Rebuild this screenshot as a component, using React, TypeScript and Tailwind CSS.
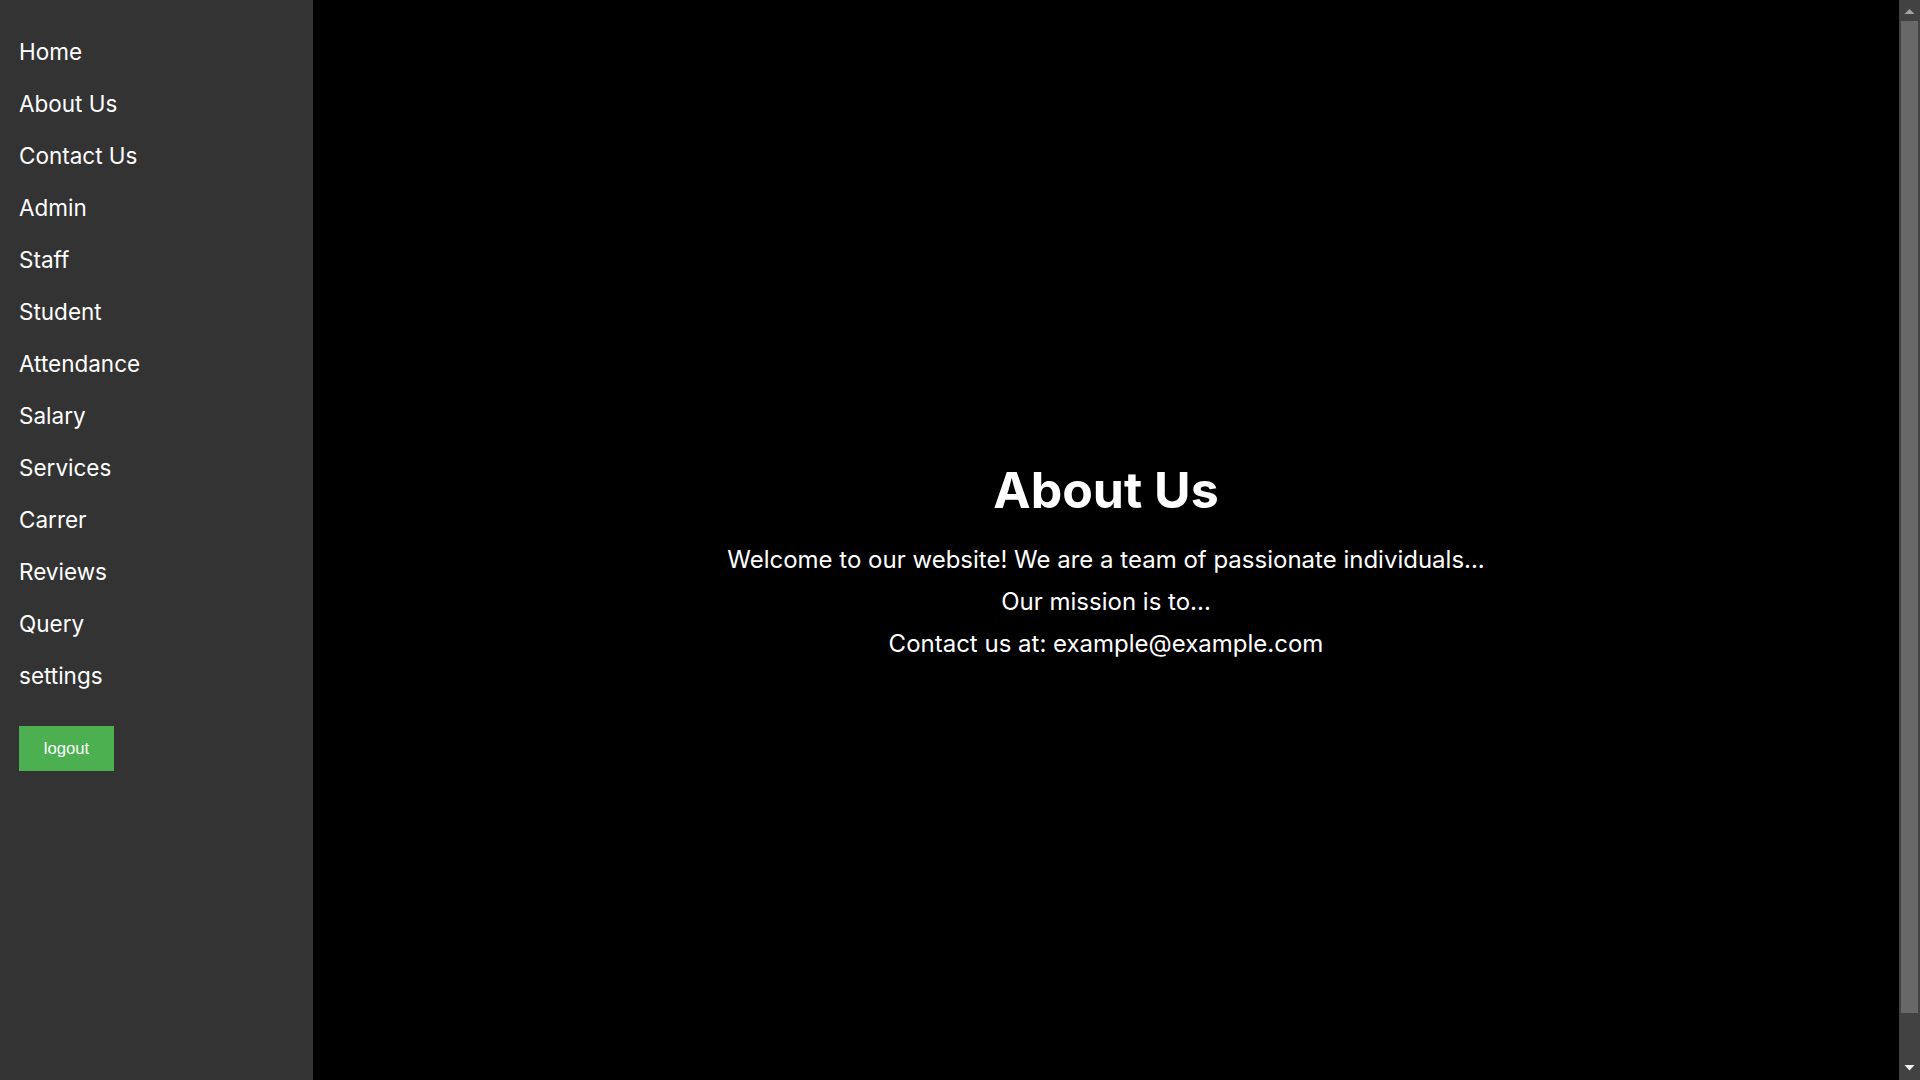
import React from "react";

const items = [
  "Home",
  "About Us",
  "Contact Us",
  "Admin",
  "Staff",
  "Student",
  "Attendance",
  "Salary",
  "Services",
  "Carrer",
  "Reviews",
  "Query",
  "settings",
];

function ScrollBar() {
  return (
    <div className="flex h-full w-[21px] shrink-0 flex-col bg-[#424242]">
      <div className="h-[21px] shrink-0">
        <svg width="21" height="21" viewBox="0 0 21 21">
          <polygon points="5.5,14 15.5,14 10.5,9" fill="#a3a3a3" />
        </svg>
      </div>
      <div className="mx-[2px] h-[992px] shrink-0 bg-[#686868]" />
      <div className="flex-1" />
      <div className="h-[21px] shrink-0">
        <svg width="21" height="21" viewBox="0 0 21 21">
          <polygon points="5.5,6 15.5,6 10.5,11.5" fill="#f2f2f2" />
        </svg>
      </div>
    </div>
  );
}

export default function App() {
  return (
    <div className="flex h-screen w-full overflow-hidden bg-black">
      <div className="flex-1 overflow-hidden">
        <div className="flex h-[1129px] w-full font-['Inter',sans-serif]">
          <aside className="flex w-[313px] shrink-0 flex-col bg-[#333333] px-[19px] pt-[26px]">
            <nav className="flex flex-col">
              {items.map((t) => (
                <a
                  key={t}
                  href="#"
                  className="block h-[52px] text-[22.5px] leading-[52px] text-white"
                >
                  {t}
                </a>
              ))}
            </nav>
            <div className="mt-[24px]">
              <button className="h-[45px] w-[95px] bg-[#4CAF50] font-['Liberation_Sans',Arial,sans-serif] text-[16.7px] text-white">
                logout
              </button>
            </div>
          </aside>
          <main className="flex flex-1 flex-col items-center justify-center bg-black text-white">
            <h1 className="mb-[24px] text-[50px] font-bold leading-[50px]">About Us</h1>
            <p className="text-[24px] leading-[42px]">
              Welcome to our website! We are a team of passionate individuals...
            </p>
            <p className="text-[24px] leading-[42px]">Our mission is to...</p>
            <p className="text-[24px] leading-[42px]">Contact us at: example@example.com</p>
          </main>
        </div>
      </div>
      <ScrollBar />
    </div>
  );
}
